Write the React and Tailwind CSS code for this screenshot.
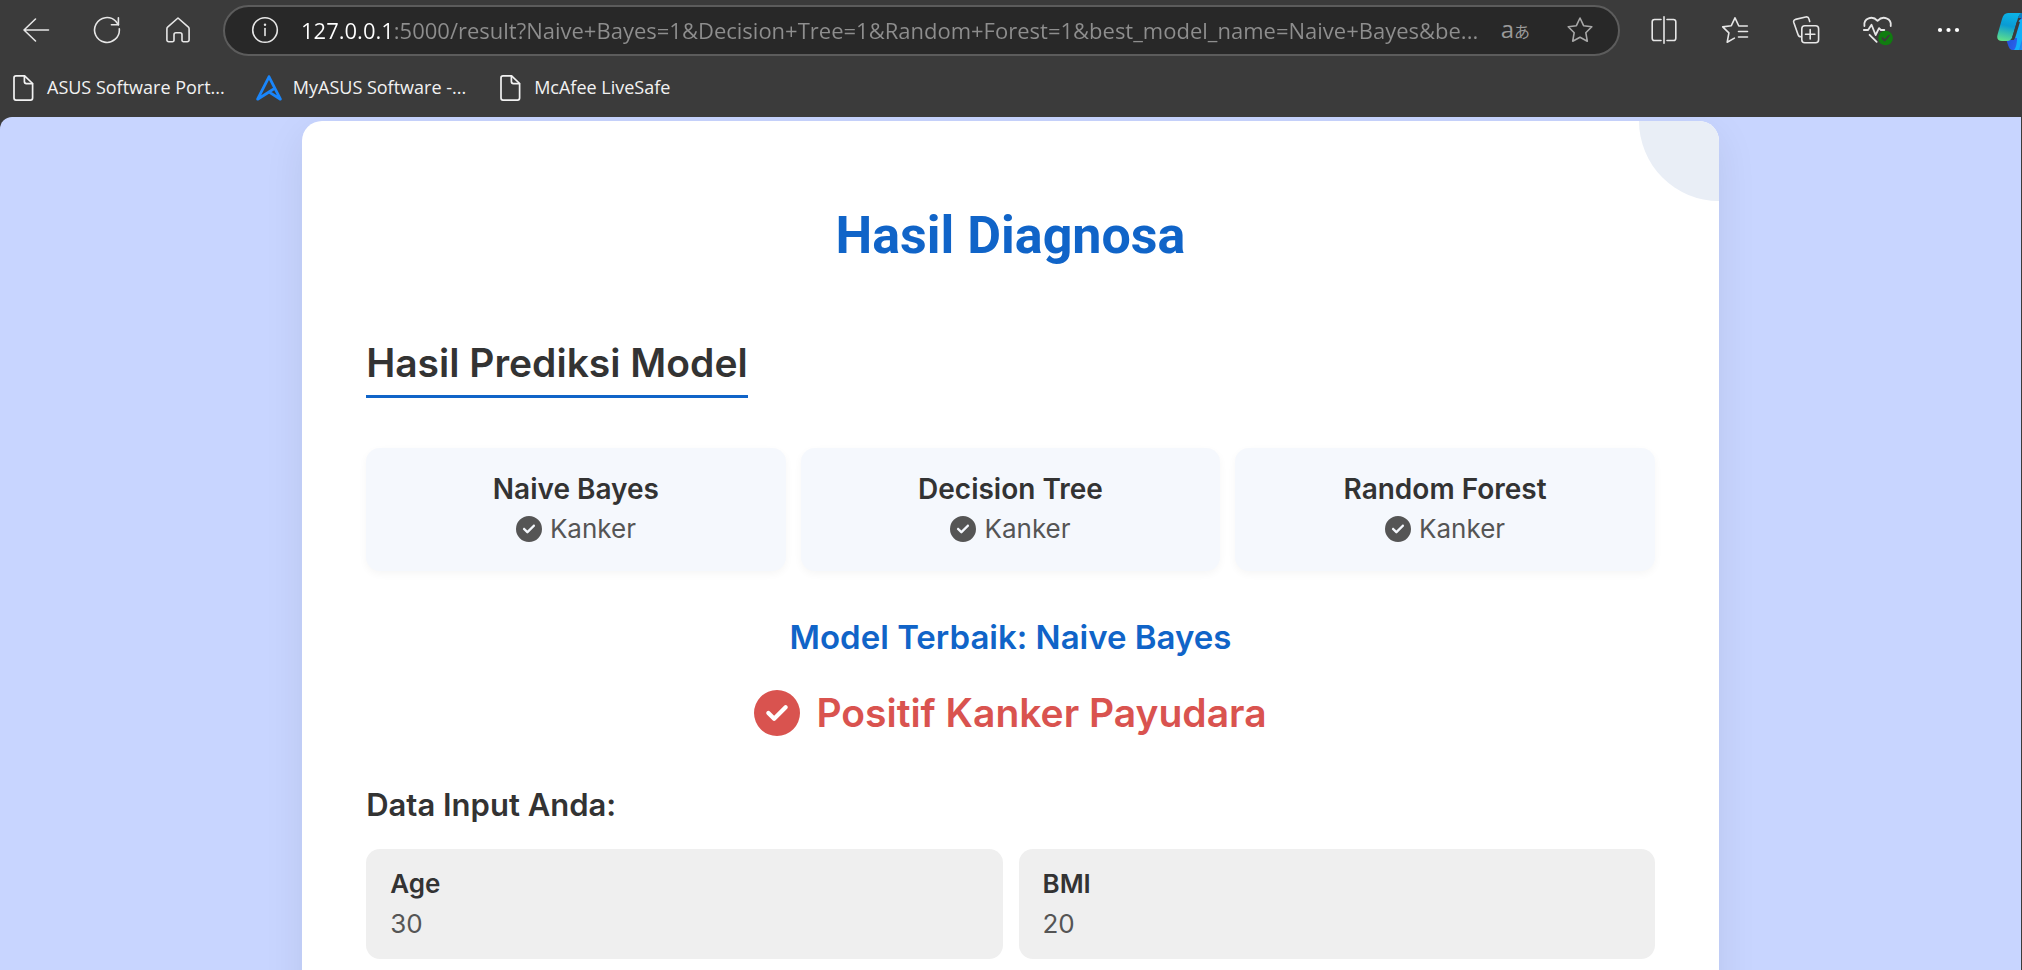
import { useState } from 'react'
import { FaCircleCheck } from 'react-icons/fa6'

const predictions = [
  { model: 'Naive Bayes', result: 'Kanker' },
  { model: 'Decision Tree', result: 'Kanker' },
  { model: 'Random Forest', result: 'Kanker' },
]

const inputs = [
  { label: 'Age', value: '30' },
  { label: 'BMI', value: '20' },
]

const bookmarks = [
  { title: 'ASUS Software Port...', icon: 'file' },
  { title: 'MyASUS Software -...', icon: 'asus' },
  { title: 'McAfee LiveSafe', icon: 'file' },
]

const startUrl =
  '127.0.0.1:5000/result?Naive+Bayes=1&Decision+Tree=1&Random+Forest=1&best_model_name=Naive+Bayes&be...'

function Icon({ children, className = 'size-7', width = 1.6 }) {
  return (
    <svg
      viewBox="0 0 28 28"
      className={`shrink-0 ${className}`}
      fill="none"
      stroke="currentColor"
      strokeWidth={width}
      strokeLinecap="round"
      strokeLinejoin="round"
      aria-hidden="true"
    >
      {children}
    </svg>
  )
}

function BarButton({ label, children }) {
  return (
    <button type="button" aria-label={label} className="flex h-12 w-[71px] shrink-0 items-center justify-center text-[#e6e6e6]">
      {children}
    </button>
  )
}

function FileIcon() {
  return (
    <Icon className="size-7" width={1.7}>
      <path d="M7 1.9h8.6l8 7.6v14.6a2 2 0 0 1-2 2H7a2 2 0 0 1-2-2V3.900a2 2 0 0 1 2-2z" />
      <path d="M15.400 2v5.600a2 2 0 0 0 2 2h6" />
    </Icon>
  )
}

function AsusIcon() {
  return (
    <Icon className="size-7 text-[#1a86fb]" width={2.8}>
      <path d="M14 2.800 2.600 25.200l11.800-7.400 4-2.600M14 2.800l11.400 22.400-10.400-6.600" />
    </Icon>
  )
}

function CopilotIcon() {
  return (
    <svg viewBox="0 0 44 40" className="h-10 w-11 shrink-0" aria-hidden="true">
      <defs>
        <linearGradient id="leaf" x1="0.5" y1="0" x2="0.3" y2="1">
          <stop offset="0" stopColor="#0bb2e6" />
          <stop offset="0.45" stopColor="#0a9bd3" />
          <stop offset="1" stopColor="#5fe08a" />
        </linearGradient>
        <linearGradient id="fold" x1="0" y1="0" x2="1" y2="0.4">
          <stop offset="0" stopColor="#1746c9" />
          <stop offset="0.6" stopColor="#2a5fe8" />
          <stop offset="1" stopColor="#18b4f5" />
        </linearGradient>
      </defs>
      <path d="M9 28h8l7-22h9c3 0 4 2 3 6l-6 21c-1 3-3 5-6 5h-8c-3 0-4-2-5-5l-1-3c0-1-1-2-2-2z" fill="url(#fold)" />
      <path d="M17 26l4-15c1-3 2-4 4-4h6l-9 31h-5c2-2 3-7 3-12z" fill="#12b0fa" />
      <path d="M11 1h14c-2 1-3 2-4 5l-5 17c-1 4-3 6-6 6H5c-4 0-6-2-4-8L5 7c1-4 3-6 6-6z" fill="url(#leaf)" />
      <path d="M21 6c1-3 2-5 4-5 3 0 4 2 5 5z" fill="#0a7fc4" />
      <path d="M21.500 9.500 16.500 26" stroke="#3b3b3b" strokeWidth="3" />
    </svg>
  )
}

function Toolbar() {
  const [url, setUrl] = useState(startUrl)

  return (
    <div className="flex h-[60px] items-center overflow-hidden">
      <BarButton label="Back">
        <Icon>
          <path d="M26.500 14H2M13.500 3 2 14l11.500 11" />
        </Icon>
      </BarButton>
      <BarButton label="Refresh">
        <Icon>
          <path d="M26.300 12.800A12.400 12.400 0 1 1 22.800 5.300L25.400 8.800" />
          <path d="M25.400 1.800v7h-7" />
        </Icon>
      </BarButton>
      <BarButton label="Home">
        <Icon>
          <path d="M14 2 3.600 11.200a2 2 0 0 0-.7 1.500v11.200a1.800 1.800 0 0 0 1.800 1.800h3.800a1.500 1.500 0 0 0 1.500-1.500v-5.400a2 2 0 0 1 2-2h4a2 2 0 0 1 2 2v5.400a1.500 1.500 0 0 0 1.500 1.500h3.800a1.800 1.800 0 0 0 1.800-1.800V12.700a2 2 0 0 0-.7-1.500z" />
        </Icon>
      </BarButton>

      <form
        className="mr-2 ml-[10px] flex h-[51px] min-w-0 flex-1 items-center rounded-full border-2 border-[#5c5c5c] bg-[#282828] pr-6 pl-[26px]"
        onSubmit={(e) => e.preventDefault()}
      >
        <button type="button" aria-label="Site information" className="shrink-0 text-[#e6e6e6]">
          <Icon>
            <circle cx="14" cy="14" r="12.300" />
            <path d="M14 12.500v7" />
            <path d="M14 8.600v.1" strokeWidth="2.400" />
          </Icon>
        </button>
        <input
          type="text"
          aria-label="Address"
          value={url}
          onChange={(e) => setUrl(e.target.value)}
          className="ml-[22px] min-w-0 flex-1 bg-[linear-gradient(90deg,#ffffff_93px,#8e8e8e_93px)] bg-clip-text text-[22px] text-transparent caret-white outline-none"
        />
        <button type="button" aria-label="Translate" className="mr-9 flex shrink-0 items-baseline text-[24px] leading-8 text-[#9a9a9a]">
          a<span className="text-[16px]">あ</span>
        </button>
        <button type="button" aria-label="Add to favorites" className="shrink-0 text-[#a8a8a8]">
          <Icon>
            <path d="M14 2l3.600 7.700 8.200 1.100-6 5.900 1.500 8.500L14 21.200l-7.300 4 1.500-8.500-6-5.900 8.200-1.100z" />
          </Icon>
        </button>
      </form>

      <BarButton label="Split screen">
        <Icon>
          <path d="M11 3.500H4.500a2.300 2.300 0 0 0-2.300 2.300v16.400a2.300 2.300 0 0 0 2.300 2.300H11M17 3.500h6.500a2.300 2.300 0 0 1 2.300 2.300v16.400a2.300 2.300 0 0 1-2.300 2.300H17M14 .8v26.400" />
        </Icon>
      </BarButton>
      <BarButton label="Favorites">
        <Icon>
          <path d="M26.300 10h-8.500L14 1.800l-3.700 7.900-8.600 1.200 6.200 6L6.200 26.200l7.200-4.100M17.500 15.500h9M17.500 21h9" />
        </Icon>
      </BarButton>
      <BarButton label="Collections">
        <Icon>
          <path d="M9 20.800c-1.600 0-2.600-.8-3-2.300L1.800 6.600c-.5-1.600.2-2.800 1.700-3.200L13.700 1c1.600-.4 2.800.3 3.200 1.800l.8 2.700" />
          <rect x="9.800" y="9.800" width="16.800" height="17" rx="3" />
          <path d="M18.200 13.600v9.400M13.500 18.300h9.400" />
        </Icon>
      </BarButton>
      <BarButton label="Browser essentials">
        <Icon className="size-8">
          <path d="M3 10.500C2 3.500 10 1 14.500 6c4.500-5 12.500-2.500 11.500 4.500M2.500 14h3.700l3-4.600 3.600 9 3-6 1.600 1.600h3M7.500 18.200l6.200 6.200" />
          <circle cx="21.500" cy="21" r="6.400" fill="#107c10" stroke="none" />
          <path d="m18.800 21.200 2 2 3.600-4.200" stroke="#3b3b3b" />
        </Icon>
      </BarButton>
      <BarButton label="Settings and more">
        <Icon>
          <g fill="#fff" stroke="none">
            <circle cx="6" cy="14" r="2.100" />
            <circle cx="14.500" cy="14" r="2.100" />
            <circle cx="23" cy="14" r="2.100" />
          </g>
        </Icon>
      </BarButton>
      <button type="button" aria-label="Copilot" className="flex w-[39px] shrink-0 overflow-hidden pt-1 pl-[14px]">
        <CopilotIcon />
      </button>
    </div>
  )
}

function BookmarksBar() {
  return (
    <nav aria-label="Bookmarks" className="flex h-[57px] items-center gap-[30px] pb-[2px] pl-[9px] text-[18px] text-[#f2f2f2]">
      {bookmarks.map((b) => (
        <a key={b.title} href="#" className="flex items-center gap-[10px] whitespace-nowrap">
          {b.icon === 'asus' ? <AsusIcon /> : <FileIcon />}
          {b.title}
        </a>
      ))}
    </nav>
  )
}

function ResultCard() {
  return (
    <main className="relative mx-auto w-[70.1%] overflow-hidden rounded-t-[20px] bg-white px-16 pt-20 pb-16 shadow-[0_12px_40px_rgba(0,0,0,0.08)]">
      <div className="absolute -top-20 -right-20 size-40 rounded-full bg-[#e9eef6]" />

      <h1 className="text-center font-[Roboto,sans-serif] text-[52px] leading-[70px] font-bold text-[#1064c8]">
        Hasil Diagnosa
      </h1>

      <section className="mt-[66px]">
        <h2 className="inline-block border-b-3 border-[#1064c8] pb-[6px] text-[39px] leading-[52px] font-semibold">
          Hasil Prediksi Model
        </h2>
        <div className="mt-[50px] grid grid-cols-3 gap-[15px]">
          {predictions.map((p) => (
            <div key={p.model} className="rounded-[14px] bg-[#f5f8fd] pt-[21px] pb-[22px] text-center shadow-[0_3px_8px_rgba(0,0,0,0.04)]">
              <h3 className="text-[28px] leading-10 font-semibold">{p.model}</h3>
              <p className="flex items-center justify-center gap-2 text-[26px] leading-10 text-[#555]">
                <FaCircleCheck />
                {p.result}
              </p>
            </div>
          ))}
        </div>
      </section>

      <section className="mt-[42px] text-center">
        <h2 className="text-[33px] leading-[48px] font-semibold text-[#1064c8]">Model Terbaik: Naive Bayes</h2>
        <p className="mt-6 flex items-center justify-center gap-4 text-[39px] leading-[56px] font-semibold text-[#d9534f]">
          <FaCircleCheck className="size-[46px]" />
          Positif Kanker Payudara
        </p>
      </section>

      <section className="mt-10">
        <h2 className="text-[31px] leading-[48px] font-semibold">Data Input Anda:</h2>
        <dl className="mt-5 grid grid-cols-2 gap-4">
          {inputs.map((item) => (
            <div key={item.label} className="rounded-[14px] bg-[#efefef] px-6 py-[15px]">
              <dt className="text-[26px] leading-10 font-semibold">{item.label}</dt>
              <dd className="text-[26px] leading-10 text-[#555]">{item.value}</dd>
            </div>
          ))}
        </dl>
      </section>
    </main>
  )
}

export default function App() {
  return (
    <div className="flex h-screen flex-col overflow-hidden bg-[#3b3b3b] font-['Open_Sans','Noto_Sans_CJK_JP',sans-serif]">
      <header className="shrink-0">
        <Toolbar />
        <BookmarksBar />
      </header>
      <div className="mr-px min-h-0 flex-1 overflow-hidden rounded-tl-xl bg-[#c8d5ff] pt-1 font-[Inter,sans-serif] text-[#333]">
        <ResultCard />
      </div>
    </div>
  )
}
